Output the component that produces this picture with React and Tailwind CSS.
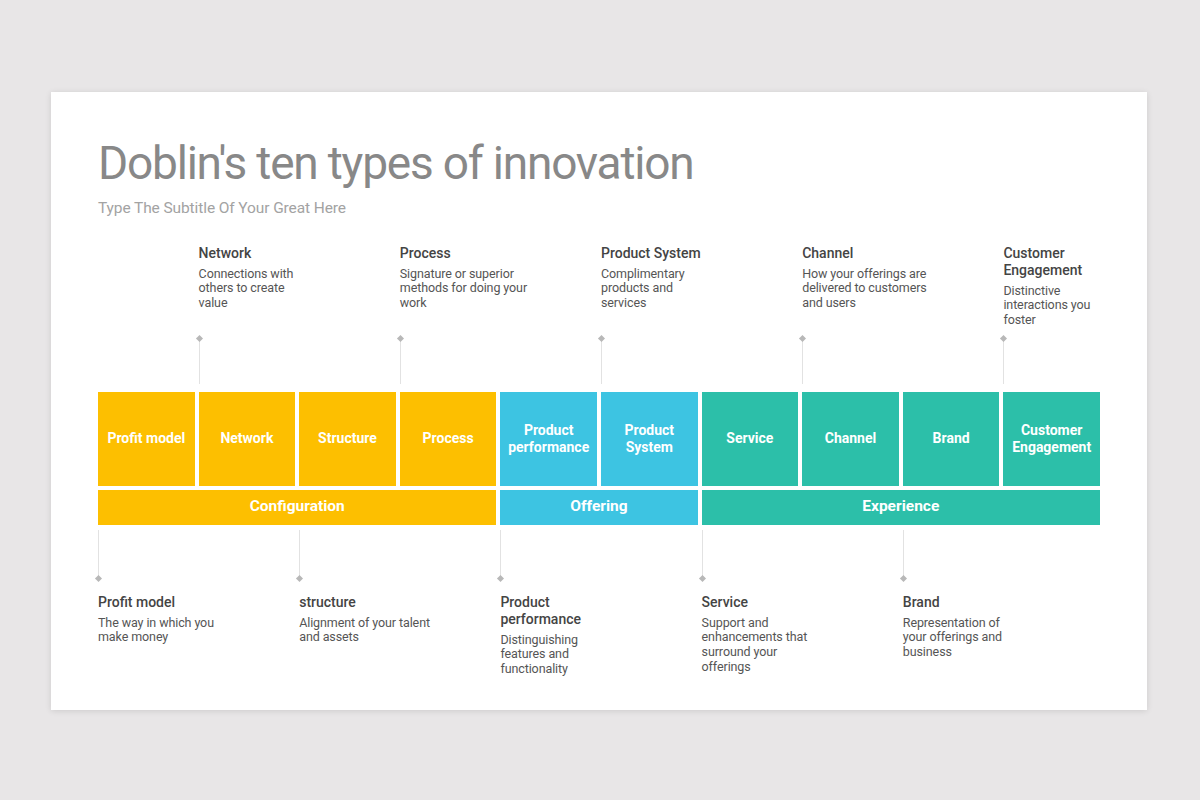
const COLORS = {
  y: 'bg-[#fdbf00]',
  b: 'bg-[#3dc4e2]',
  t: 'bg-[#2cbfa9]',
};

const items = [
  { name: ['Profit model'], label: ['Profit model'], desc: ['The way in which you', 'make money'], pos: 'bottom', color: 'y' },
  { name: ['Network'], label: ['Network'], desc: ['Connections with', 'others to create', 'value'], pos: 'top', color: 'y' },
  { name: ['Structure'], label: ['structure'], desc: ['Alignment of your talent', 'and assets'], pos: 'bottom', color: 'y' },
  { name: ['Process'], label: ['Process'], desc: ['Signature or superior', 'methods for doing your', 'work'], pos: 'top', color: 'y' },
  { name: ['Product', 'performance'], label: ['Product', 'performance'], desc: ['Distinguishing', 'features and', 'functionality'], pos: 'bottom', color: 'b' },
  { name: ['Product', 'System'], label: ['Product System'], desc: ['Complimentary', 'products and', 'services'], pos: 'top', color: 'b' },
  { name: ['Service'], label: ['Service'], desc: ['Support and', 'enhancements that', 'surround your', 'offerings'], pos: 'bottom', color: 't' },
  { name: ['Channel'], label: ['Channel'], desc: ['How your offerings are', 'delivered to customers', 'and users'], pos: 'top', color: 't' },
  { name: ['Brand'], label: ['Brand'], desc: ['Representation of', 'your offerings and', 'business'], pos: 'bottom', color: 't' },
  { name: ['Customer', 'Engagement'], label: ['Customer', 'Engagement'], desc: ['Distinctive', 'interactions you', 'foster'], pos: 'top', color: 't' },
];

const groups = [
  { name: 'Configuration', span: 'col-span-4', color: 'y' },
  { name: 'Offering', span: 'col-span-2', color: 'b' },
  { name: 'Experience', span: 'col-span-4', color: 't' },
];

function Dot() {
  return <div className="w-[5px] h-[5px] -ml-[2px] rotate-45 bg-[#b8b8b8]" />;
}

function Label({ item }) {
  return (
    <div className="whitespace-nowrap">
      <div className="text-[14px] leading-[17px] font-medium text-[#444444]">
        {item.label.map((l) => (
          <div key={l}>{l}</div>
        ))}
      </div>
      <div className="mt-[5px] text-[12.5px] leading-[14.7px] text-[#555555] tracking-[-0.1px]">
        {item.desc.map((d) => (
          <div key={d}>{d}</div>
        ))}
      </div>
    </div>
  );
}

export default function App() {
  return (
    <div className="w-[1200px] h-[800px] bg-[#e8e6e7] pt-[92px] pl-[51px] font-['Roboto','Liberation_Sans',sans-serif]">
      <div className="w-[1096px] h-[618px] bg-white shadow-[0_1px_6px_rgba(0,0,0,0.12)] px-[47px] pt-[48px]">
        <h1 className="text-[46px] leading-none text-[#888888] font-normal tracking-[-1.2px]">
          Doblin's ten types of innovation
        </h1>
        <p className="mt-[15px] text-[15.5px] leading-none text-[#a3a3a3] tracking-[-0.1px]">
          Type The Subtitle Of Your Great Here
        </p>

        {/* top labels */}
        <div className="mt-[28px] grid grid-cols-10 gap-x-1 h-[147px]">
          {items.map((item, i) => (
            <div key={i} className="flex flex-col justify-between">
              {item.pos === 'top' ? (
                <>
                  <Label item={item} />
                  <div className="flex flex-col pb-[8px]">
                    <Dot />
                    <div className="w-px h-[43px] bg-[#e2e2e2]" />
                  </div>
                </>
              ) : null}
            </div>
          ))}
        </div>

        {/* blocks */}
        <div className="grid grid-cols-10 gap-1">
          {items.map((item, i) => (
            <div
              key={i}
              className={`${COLORS[item.color]} h-[94px] flex flex-col items-center justify-center text-center text-white font-bold text-[14px] leading-[16.7px]`}
            >
              {item.name.map((n) => (
                <div key={n}>{n}</div>
              ))}
            </div>
          ))}
          {groups.map((g) => (
            <div
              key={g.name}
              className={`${COLORS[g.color]} ${g.span} h-[35px] flex items-center justify-center text-white font-bold text-[15.5px]`}
            >
              {g.name}
            </div>
          ))}
        </div>

        {/* bottom labels */}
        <div className="grid grid-cols-10 gap-x-1">
          {items.map((item, i) => (
            <div key={i}>
              {item.pos === 'bottom' ? (
                <>
                  <div className="flex flex-col pt-[5px]">
                    <div className="w-px h-[46px] bg-[#e2e2e2]" />
                    <Dot />
                  </div>
                  <div className="mt-[13px]">
                    <Label item={item} />
                  </div>
                </>
              ) : null}
            </div>
          ))}
        </div>
      </div>
    </div>
  );
}
